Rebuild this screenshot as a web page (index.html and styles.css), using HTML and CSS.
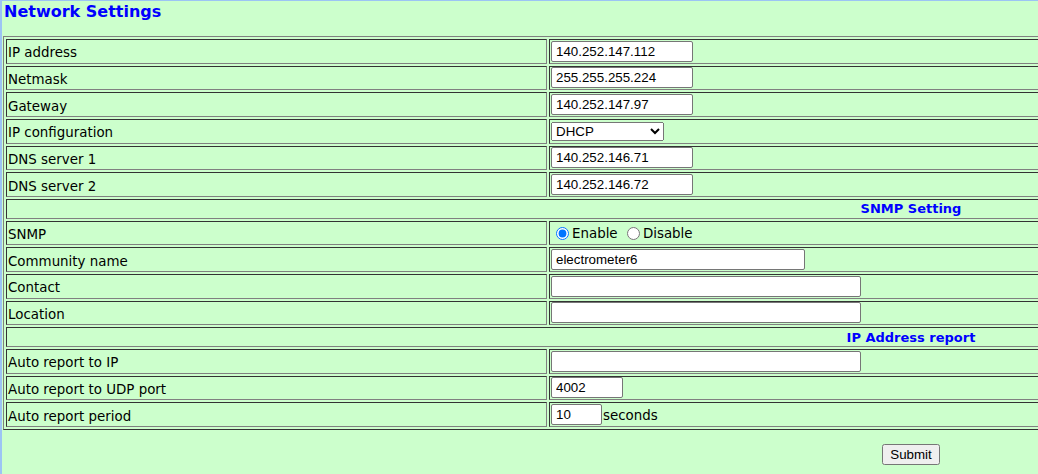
FILE: index.html
```html
<!DOCTYPE html>
<html>
<head>
<meta charset="utf-8">
<title>Network Settings</title>
<link rel="stylesheet" href="styles.css">
</head>
<body>
<div class="page">
  <div class="title">Network Settings</div>
  <form class="form">
    <table class="grid">
      <tr><td class="lbl"><span class="txt">IP address</span></td><td class="val"><input class="in ip" type="text" value="140.252.147.112"></td></tr>
      <tr><td class="lbl"><span class="txt">Netmask</span></td><td class="val"><input class="in ip" type="text" value="255.255.255.224"></td></tr>
      <tr><td class="lbl"><span class="txt">Gateway</span></td><td class="val"><input class="in ip" type="text" value="140.252.147.97"></td></tr>
      <tr><td class="lbl"><span class="txt">IP configuration</span></td><td class="val"><select class="sel"><option>DHCP</option><option>Static</option></select></td></tr>
      <tr><td class="lbl"><span class="txt">DNS server 1</span></td><td class="val"><input class="in ip" type="text" value="140.252.146.71"></td></tr>
      <tr><td class="lbl"><span class="txt">DNS server 2</span></td><td class="val"><input class="in ip" type="text" value="140.252.146.72"></td></tr>
      <tr><td class="hdr" colspan="2">SNMP Setting</td></tr>
      <tr><td class="lbl"><span class="txt">SNMP</span></td><td class="val"><label class="opt"><input type="radio" name="snmp" checked>Enable</label> <label class="opt"><input type="radio" name="snmp">Disable</label></td></tr>
      <tr><td class="lbl"><span class="txt">Community name</span></td><td class="val"><input class="in mid" type="text" value="electrometer6"></td></tr>
      <tr><td class="lbl"><span class="txt">Contact</span></td><td class="val"><input class="in wide" type="text" value=""></td></tr>
      <tr><td class="lbl"><span class="txt">Location</span></td><td class="val"><input class="in wide" type="text" value=""></td></tr>
      <tr><td class="hdr" colspan="2">IP Address report</td></tr>
      <tr><td class="lbl"><span class="txt">Auto report to IP</span></td><td class="val"><input class="in wide" type="text" value=""></td></tr>
      <tr><td class="lbl"><span class="txt">Auto report to UDP port</span></td><td class="val"><input class="in port" type="text" value="4002"></td></tr>
      <tr><td class="lbl"><span class="txt">Auto report period</span></td><td class="val"><input class="in per" type="text" value="10"><span class="unit">seconds</span></td></tr>
    </table>
    <div class="actions"><button type="button" class="btn">Submit</button></div>
  </form>
</div>
</body>
</html>
```
FILE: styles.css
```css
html, body {
  margin: 0;
  padding: 0;
  overflow: hidden;
}
body {
  background: #ccffcc;
  border-left: 2px solid #9cc4f4;
  border-top: 1px solid #9cc4f4;
  font-family: "DejaVu Sans", Verdana, sans-serif;
  font-size: 13.4px;
  color: #000;
  height: 473px;
}
.page {
  width: 1816px;
  padding-left: 1px;
}
.title {
  color: #0000ff;
  font-weight: bold;
  font-size: 16px;
  line-height: 20px;
  padding-top: 1px;
  padding-left: 1px;
  height: 34px;
}
.form {
  margin: 0;
}
.grid {
  width: 100%;
  border-collapse: separate;
  border-spacing: 2px;
  border: 1px solid;
  border-color: #808080 #333333 #333333 #808080;
}
.grid td {
  border: 1px solid;
  border-color: #333333 #808080 #808080 #333333;
  padding: 0.83px 1px;
  vertical-align: middle;
  line-height: 16px;
}
.lbl {
  width: 537px;
  height: 21px;
}
.txt {
  display: inline-block;
  padding-top: 4px;
}
.val {
  height: 21px;
}
.grid .hdr {
  text-align: center;
  color: #0000ff;
  font-weight: bold;
  font-size: 13px;
  height: 15.67px;
  line-height: 15px;
  padding: 1px;
}
.in {
  font-family: "Liberation Sans", Arial, sans-serif;
  font-size: 13.333px;
  box-sizing: border-box;
  height: 21px;
  margin: 0;
  padding: 1px 3px 1px 4px;
  border: 1px solid #767676;
  border-radius: 2px;
  background: #fff;
  color: #000;
  vertical-align: middle;
}
.ip { width: 142px; }
.mid { width: 254px; }
.wide { width: 310px; }
.port { width: 72px; }
.per { width: 51px; }
.sel {
  font-family: "Liberation Sans", Arial, sans-serif;
  font-size: 13.333px;
  width: 113px;
  height: 19px;
  margin: 0;
  vertical-align: middle;
}
.opt input {
  margin: 3px 3px 0 5px;
  vertical-align: -2px;
}
.unit {
  display: inline-block;
  padding-left: 1px;
  padding-top: 3px;
  vertical-align: middle;
}
.actions {
  text-align: center;
  padding-top: 14px;
}
.btn {
  font-family: "Liberation Sans", Arial, sans-serif;
  font-size: 13.333px;
  padding: 1px 6px;
  height: 21px;
}
```
